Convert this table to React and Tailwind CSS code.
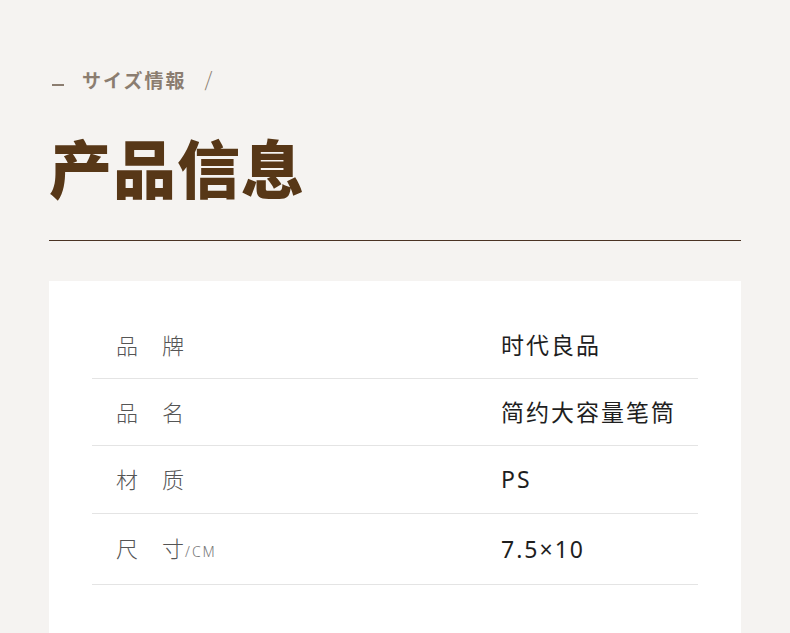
export default function App() {
  const rows = [
    { label: ["品", "牌"], value: "时代良品", h: "h-[67px]" },
    { label: ["品", "名"], value: "简约大容量笔筒", h: "h-[67px]" },
    { label: ["材", "质"], value: "PS", h: "h-[68px]" },
    { label: ["尺", "寸"], unit: "/CM", value: "7.5×10", h: "h-[71px]" },
  ];

  return (
    <div
      className="w-[790px] h-[633px] overflow-hidden bg-[#f5f3f1]"
      style={{ fontFamily: '"Noto Sans CJK SC", "Noto Sans", sans-serif' }}
    >
      <div className="px-[49px] pt-[66px]">
        {/* Header */}
        <div className="flex items-center h-[26px]">
          <span className="ml-[3px] mt-[12px] w-[12px] h-[2px] bg-[#8b7d70]" />
          <span className="ml-[18px] text-[19px] font-bold tracking-[2px] text-[#8b7d70] leading-none">
            サイズ情報
          </span>
          <span className="ml-[18px] text-[20px] text-[#8b7d70] leading-none font-light">
            /
          </span>
        </div>

        {/* Title */}
        <h1 className="mt-[42px] text-[63px] font-black leading-none tracking-[1px] text-[#573717]">
          产品信息
        </h1>

        <div className="mt-[43px] h-[1px] bg-[#4a3324]" />

        {/* Info card */}
        <div className="mt-[40px] bg-white px-[43px] pt-[31px] pb-[80px]">
          {rows.map((r, i) => (
            <div
              key={i}
              className={`grid grid-cols-[409px_1fr] items-center border-b border-[#e4e4e4] ${r.h}`}
            >
              <div className="pl-[24px] -mt-[3px] flex items-baseline text-[22px] font-light text-[#555555] leading-none">
                <span>{r.label[0]}</span>
                <span className="ml-[24px]">{r.label[1]}</span>
                {r.unit && (
                  <span
                    className="ml-[1px] text-[14px] tracking-[2px] text-[#777777]"
                    style={{ fontFamily: '"Noto Sans", sans-serif' }}
                  >
                    {r.unit}
                  </span>
                )}
              </div>
              <div
                className="text-[23px] tracking-[2px] text-[#1e1e1e] leading-none"
                style={{ fontFamily: '"Noto Sans", "Noto Sans CJK SC", sans-serif' }}
              >
                {r.value}
              </div>
            </div>
          ))}
        </div>
      </div>
    </div>
  );
}
